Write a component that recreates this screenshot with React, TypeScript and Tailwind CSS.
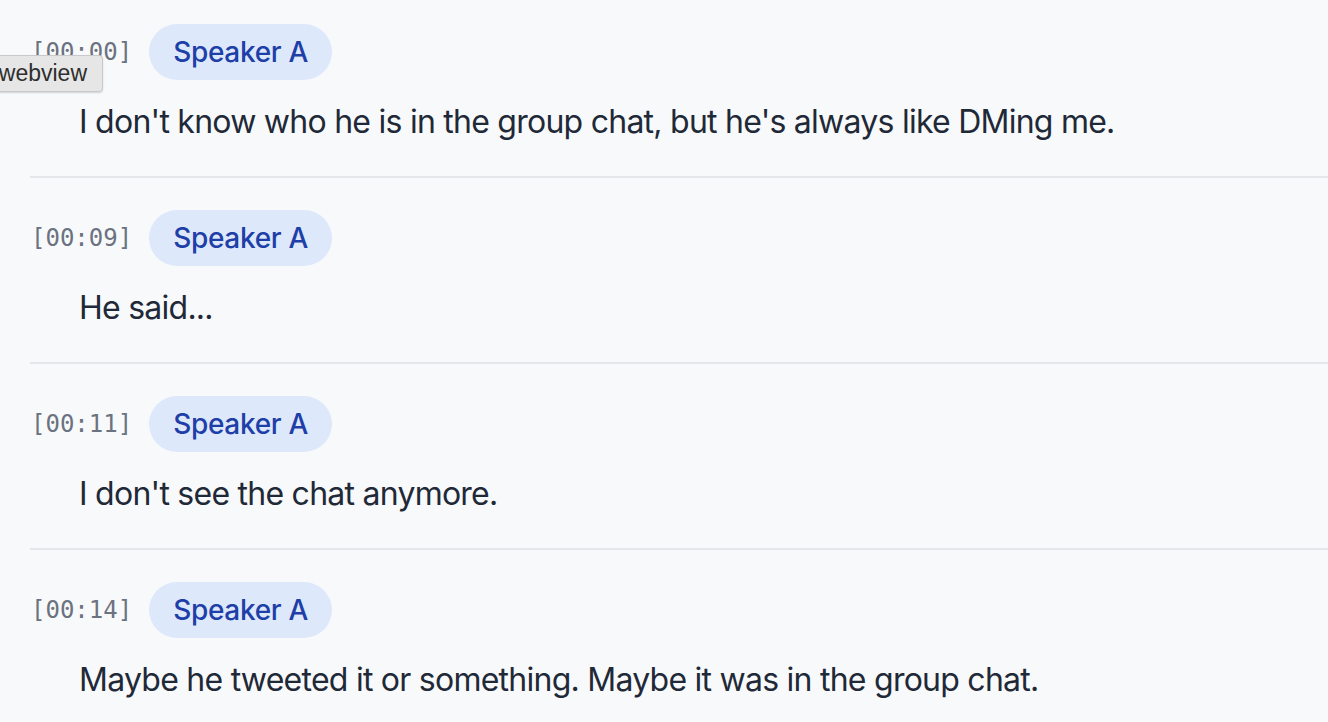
const segments = [
  { time: "00:00", speaker: "Speaker A", text: "I don't know who he is in the group chat, but he's always like DMing me." },
  { time: "00:09", speaker: "Speaker A", text: "He said..." },
  { time: "00:11", speaker: "Speaker A", text: "I don't see the chat anymore." },
  { time: "00:14", speaker: "Speaker A", text: "Maybe he tweeted it or something. Maybe it was in the group chat." },
];

export default function App() {
  return (
    <div className="relative min-h-[722px] w-full overflow-hidden bg-[#f8f9fb] font-['Inter','Noto_Sans',sans-serif]">
      <div className="-mt-2 pl-[30px]">
        {segments.map((s, i) => (
          <div key={i} className="border-b-2 border-[#e5e7eb] pt-8 pb-[30px]">
            <div className="flex items-center gap-[17px]">
              <span className="pl-[1px] font-['DejaVu_Sans_Mono','Liberation_Mono',monospace] text-[24px] leading-[32px] text-[#6b7280]">
                [{s.time}]
              </span>
              <span className="rounded-full bg-[#dde8fb] px-6 py-2 text-[28px] leading-[40px] font-medium tracking-[-0.3px] text-[#1e3fa8]">
                {s.speaker}
              </span>
            </div>
            <p className="mt-[18px] pl-[49px] text-[32px] leading-[48px] tracking-[-0.75px] text-[#1f2937]">{s.text}</p>
          </div>
        ))}
      </div>

      <div className="absolute left-[-12px] top-[55px] flex h-[37px] w-[115px] items-center justify-end rounded-[4px] border border-[#c9c9c9] bg-[#e6e6e6] pr-[15px] font-['Liberation_Sans',sans-serif] text-[23px] text-[#2e2e2e] shadow-[0_1px_2px_rgba(0,0,0,0.15)]">
        webview
      </div>
    </div>
  );
}
